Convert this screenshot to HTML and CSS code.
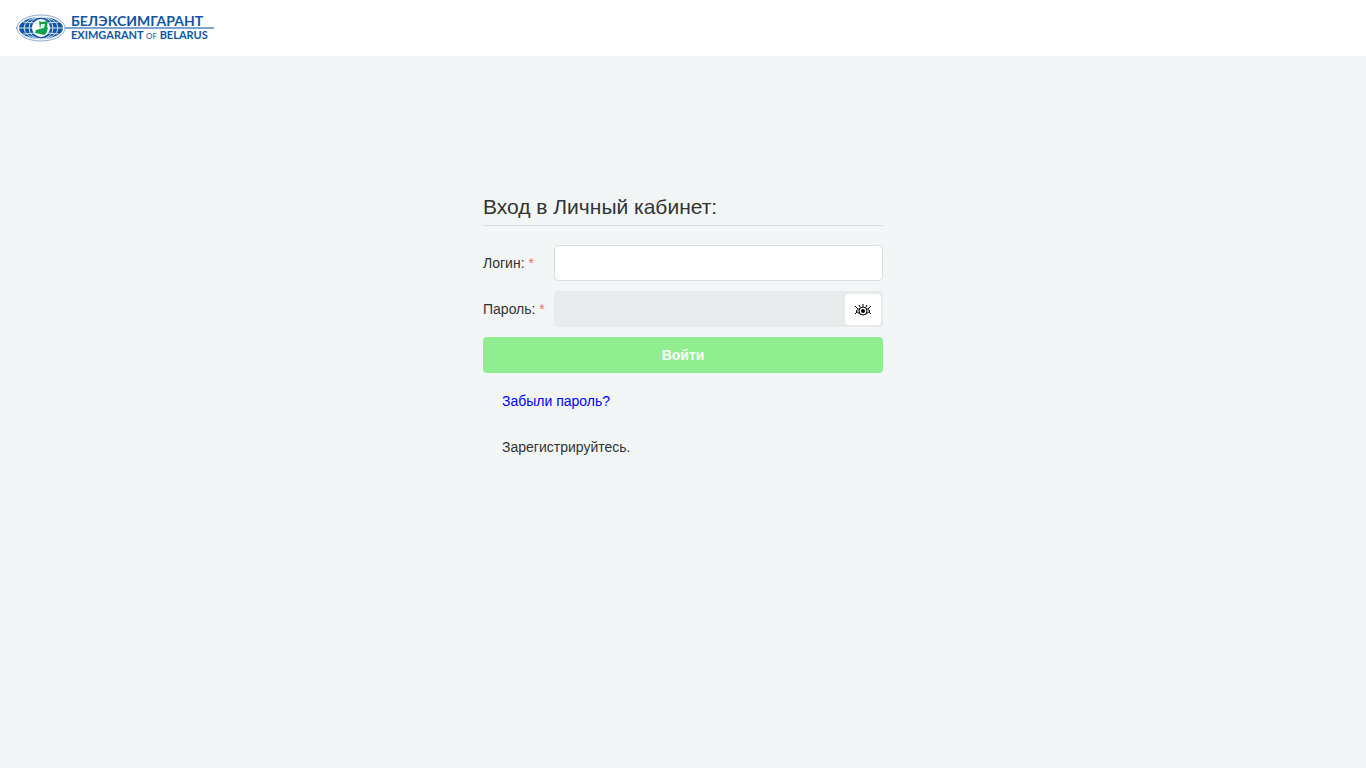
FILE: index.html
```html
<!DOCTYPE html>
<html lang="ru">
<head>
    <meta charset="UTF-8">
    <meta name="viewport" content="width=device-width, initial-scale=1.0">
    <title>Вход в Личный кабинет</title>
    <link rel="stylesheet" href="styles.css">
</head>
<body>
    <header class="header">
        <svg class="logo" viewBox="0 0 198 28" role="img" aria-label="Белэксимгарант">
            <path d="M0 14H198" stroke="#7fa3d0" stroke-width="2"/>
            <ellipse cx="25" cy="14" rx="24" ry="13" fill="#fff" stroke="#8aa9d3" stroke-width="1"/>
            <ellipse cx="25" cy="14" rx="22" ry="11" fill="#0f56a5"/>
            <g fill="none" stroke="#d5e1f0" stroke-width="1">
                <ellipse cx="25" cy="14" rx="17" ry="11"/>
                <ellipse cx="25" cy="14" rx="12" ry="11"/>
                <path d="M3 14H47M7 8Q25 11 43 8M7 20Q25 17 43 20"/>
            </g>
            <circle cx="25" cy="14" r="9" fill="#fff"/>
            <path d="M23 7l3 1 6-1-1 6 1 1-2 6-3 1-2-1-6-1 1-3 4-1z" fill="#0fa04a"/>
            <path d="M25 10l4 0-1 4-4 1z" fill="#e4f4ea"/>
            <text class="logo-ru" x="55" y="12">БЕЛЭКСИМГАРАНТ</text>
            <text class="logo-en" x="55" y="25">EXIMGARANT <tspan class="logo-of">OF</tspan> BELARUS</text>
        </svg>
    </header>

    <main class="content">
        <form class="login">
            <h1>Вход в Личный кабинет:</h1>
            <div class="row">
                <label for="login">Логин: <span class="required">*</span></label>
                <input type="text" id="login">
            </div>
            <div class="row">
                <label for="password">Пароль: <span class="required">*</span></label>
                <div class="password">
                    <input type="password" id="password">
                    <button type="button" class="eye" aria-label="Показать пароль">
                        <svg width="18" height="14" viewBox="0 0 18 14" fill="none" stroke="#000">
                            <path d="M2 8Q9 1 16 8Q9 15 2 8Z"/>
                            <circle cx="9" cy="8" r="4" fill="#fff"/>
                            <circle cx="9" cy="8" r="2" fill="#000" stroke="none"/>
                            <path d="M9 4V1M6 4L5 2M12 4L13 2M4 6L1 3M14 6L17 3M3 9L1 11M15 9L17 11"/>
                        </svg>
                    </button>
                </div>
            </div>
            <button type="submit" class="submit">Войти</button>
            <a class="link forgot" href="#">Забыли пароль?</a>
            <a class="link" href="#">Зарегистрируйтесь.</a>
        </form>
    </main>
</body>
</html>
```
FILE: styles.css
```css
* {
    box-sizing: border-box;
}
body {
    margin: 0;
    min-height: 100vh;
    background-color: #f2f6f7;
    color: #333;
    font-family: "Liberation Sans", Arial, sans-serif;
    font-size: 14px;
}
.header {
    display: flex;
    align-items: center;
    height: 56px;
    padding: 0 16px;
    background-color: #fff;
}
.logo {
    width: 198px;
    height: 28px;
    overflow: visible;
}
.logo text {
    fill: #0f56a5;
    font-family: Lato, "Liberation Sans", sans-serif;
    font-weight: bold;
}
.logo .logo-ru {
    font-size: 14px;
}
.logo .logo-en {
    font-size: 11px;
}
.logo .logo-of {
    font-size: 8px;
    font-weight: normal;
}
.content {
    display: flex;
    justify-content: center;
    padding: 136px 16px 40px;
}
.login {
    display: flex;
    flex-direction: column;
    gap: 10px;
    width: 100%;
    max-width: 400px;
}
h1 {
    margin: 0 0 9px;
    padding-bottom: 3px;
    border-bottom: 1px solid #d9dcdd;
    font-size: 21px;
    font-weight: normal;
    line-height: 30px;
}
.row {
    display: grid;
    grid-template-columns: 61px 1fr;
    gap: 10px;
    align-items: center;
}
label {
    white-space: nowrap;
}
.required {
    color: #f56c6c;
}
input {
    width: 100%;
    height: 36px;
    padding: 0 10px;
    border: 1px solid #dcdddd;
    border-radius: 4px;
    background-color: #fff;
    font: inherit;
}
.password {
    display: flex;
    height: 36px;
    padding: 3px 2px 2px;
    border-radius: 4px;
    background-color: #e8ebec;
}
.password input {
    height: 31px;
    border: none;
    background-color: transparent;
}
.eye {
    display: flex;
    flex: none;
    align-items: center;
    justify-content: center;
    width: 36px;
    height: 31px;
    padding: 0;
    border: none;
    border-radius: 4px;
    background-color: #fff;
    cursor: pointer;
}
.submit {
    height: 36px;
    border: none;
    border-radius: 4px;
    background-color: #90ee90;
    color: #fff;
    font: inherit;
    font-weight: bold;
    cursor: pointer;
}
.link {
    align-self: flex-start;
    padding: 0 19px;
    color: #333;
    line-height: 36px;
    text-decoration: none;
}
.forgot {
    color: #00f;
}
```
